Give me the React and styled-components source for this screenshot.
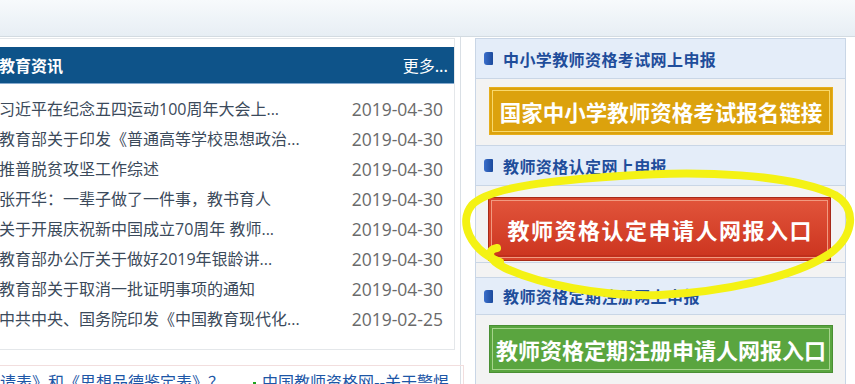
import React from 'react';
import styled, { createGlobalStyle, css } from 'styled-components';

const Global = createGlobalStyle`
  html, body { margin: 0; padding: 0; background: #fff; overflow: hidden; }
  body { font-family: "Noto Sans CJK SC", "Noto Sans", sans-serif; }
  * { box-sizing: content-box; }
`;

const Page = styled.div`
  position: relative;
  width: 855px;
  height: 384px;
  overflow: hidden;
  background: #fff;
`;

const TopBar = styled.div`
  height: 36px;
  background: linear-gradient(#f7fafc, #e7eef4);
  border-bottom: 1px solid #d3dbe1;
`;

const Main = styled.div`
  display: flex;
  height: 347px;
`;

const LeftCol = styled.div`
  flex: none;
  width: 460px;
  border-right: 1px solid #d9dfe5;
  display: flex;
  flex-direction: column;
`;

const NewsPanel = styled.div`
  margin: 1px 0 0 -10px;
  width: 463px;
  border: 1px solid #e4e7ea;
  padding-top: 8px;
  background: #fff;
`;

const NewsHeader = styled.div`
  height: 36px;
  background: #0e5389;
  border-bottom: 1px solid #86aace;
  display: flex;
  align-items: center;
  justify-content: space-between;
  padding: 0 6px 0 8px;
  color: #fff;
  font-size: 16px;
`;

const NewsTitle = styled.span`
  font-weight: 700;
`;

const More = styled.span`
  font-weight: 400;
`;

const NewsList = styled.ul`
  list-style: none;
  margin: 0;
  padding: 10px 11px 15px 8px;
`;

const NewsRow = styled.li`
  display: flex;
  justify-content: space-between;
  align-items: center;
  height: 30px;
  line-height: 30px;
  font-size: 16px;
  white-space: nowrap;
`;

const RowTitle = styled.span`
  color: #3b4a5b;
  font-family: "Open Sans", "Noto Sans CJK SC", sans-serif;
  font-size: 16px;
`;

const RowDate = styled.span`
  color: #6a6a6a;
  font-family: "Open Sans", sans-serif;
  font-size: 17.5px;
`;

const Marquee = styled.div`
  margin: 15px 0 0 -10px;
  width: 463px;
  height: 40px;
  border: 1px solid #f2dede;
  border-bottom: none;
  padding: 4px 0 0 9px;
  line-height: 22px;
  font-size: 16px;
  color: #1d56a6;
  white-space: nowrap;
  overflow: hidden;
`;

const Bullet = styled.span`
  display: inline-block;
  width: 3px;
  height: 3px;
  background: #1fa51f;
  vertical-align: middle;
  margin: 0 6px 0 29px;
`;

const RightCol = styled.div`
  flex: 1;
  padding: 1px 0 0 14px;
  display: flex;
  flex-direction: column;
`;

const Box = styled.div`
  width: 369px;
  flex: 1;
  border: 1px solid #c9d6e6;
  border-bottom: none;
  background: #f3f3f3;
`;

const SectionHeader = styled.div`
  height: ${p => p.$h || 39}px;
  background: #e4edf9;
  border-bottom: 1px solid #c9d6e6;
  display: flex;
  align-items: center;
  padding-left: 8px;
  ${p => p.$gap && css`
    margin-top: ${p.$gap}px;
    border-top: 1px solid #c9d6e6;
  `}
`;

const SectionIcon = styled.span`
  width: 9px;
  height: 13px;
  border-radius: 3px 1px 1px 3px;
  background: linear-gradient(90deg, #3a6ecb, #1b4a9c);
  margin-right: 10px;
  flex: none;
`;

const SectionTitle = styled.span`
  font-size: 16px;
  font-weight: 700;
  color: #1f4d9b;
  letter-spacing: 0.4px;
`;

const SectionBody = styled.div`
  padding: ${p => p.$pad};
  ${p => p.$bottomBorder && css`border-bottom: 1px solid #c9d6e6;`}
`;

const variants = {
  yellow: css`
    width: 344px;
    height: 48px;
    background: #dca20d;
    border: 1px solid #e6ae1c;
    box-shadow: inset 0 0 0 2px #dca20d, inset 0 0 0 3px #f9d96d;
    font-size: 21.5px;
  `,
  red: css`
    width: 343px;
    height: 64px;
    margin-left: -1px;
    background: linear-gradient(#e2553b, #cb331e);
    border: 1px solid #a72a18;
    box-shadow: inset 0 0 0 2px #d8442b, inset 0 0 0 3px #f19a80, inset 0 -2px 0 3px #c02f1c;
    font-size: 22px;
    letter-spacing: 1.5px;
    text-indent: 1.5px;
  `,
  green: css`
    width: 344px;
    height: 48px;
    background: #5aa53f;
    border: 1px solid #4a8f33;
    box-shadow: inset 0 0 0 2px #5aa53f, inset 0 0 0 3px #a6d48c;
    font-size: 22px;
  `,
};

const LinkButton = styled.div`
  box-sizing: border-box;
  display: flex;
  align-items: center;
  justify-content: center;
  color: #fff;
  font-weight: 700;
  white-space: nowrap;
  ${p => variants[p.$variant]}
`;

const Overlay = styled.svg`
  position: absolute;
  left: 0;
  top: 0;
  pointer-events: none;
`;

const news = [
  ['习近平在纪念五四运动100周年大会上...', '2019-04-30'],
  ['教育部关于印发《普通高等学校思想政治...', '2019-04-30'],
  ['推普脱贫攻坚工作综述', '2019-04-30'],
  ['张开华：一辈子做了一件事，教书育人', '2019-04-30'],
  ['关于开展庆祝新中国成立70周年 教师...', '2019-04-30'],
  ['教育部办公厅关于做好2019年银龄讲...', '2019-04-30'],
  ['教育部关于取消一批证明事项的通知', '2019-04-30'],
  ['中共中央、国务院印发《中国教育现代化...', '2019-02-25'],
];

export default function App() {
  return (
    <Page>
      <Global />
      <TopBar />
      <Main>
        <LeftCol>
          <NewsPanel>
            <NewsHeader>
              <NewsTitle>教育资讯</NewsTitle>
              <More>更多...</More>
            </NewsHeader>
            <NewsList>
              {news.map(([t, d], i) => (
                <NewsRow key={i}>
                  <RowTitle>{t}</RowTitle>
                  <RowDate>{d}</RowDate>
                </NewsRow>
              ))}
            </NewsList>
          </NewsPanel>
          <Marquee>
            <span>请表》和《思想品德鉴定表》？</span>
            <Bullet />
            <span>中国教师资格网--关于警惕</span>
          </Marquee>
        </LeftCol>
        <RightCol>
          <Box>
            <SectionHeader>
              <SectionIcon />
              <SectionTitle>中小学教师资格考试网上申报</SectionTitle>
            </SectionHeader>
            <SectionBody $pad="8px 0 10px 13px" $bottomBorder>
              <LinkButton $variant="yellow">国家中小学教师资格考试报名链接</LinkButton>
            </SectionBody>
            <SectionHeader>
              <SectionIcon />
              <SectionTitle>教师资格认定网上申报</SectionTitle>
            </SectionHeader>
            <SectionBody $pad="11px 0 1px 13px" $bottomBorder>
              <LinkButton $variant="red">教师资格认定申请人网报入口</LinkButton>
            </SectionBody>
            <SectionHeader $h={36} $gap={14}>
              <SectionIcon />
              <SectionTitle>教师资格定期注册网上申报</SectionTitle>
            </SectionHeader>
            <SectionBody $pad="10px 0 20px 13px">
              <LinkButton $variant="green">教师资格定期注册申请人网报入口</LinkButton>
            </SectionBody>
          </Box>
        </RightCol>
      </Main>
      <Overlay width="855" height="384" viewBox="0 0 855 384">
        <path
          d="M 500 262 C 470 250, 458 222, 472 205 C 490 186, 560 180, 620 176 C 700 170, 790 174, 835 195 C 860 210, 852 240, 826 256 C 790 278, 722 292, 660 295 C 600 297, 540 284, 505 268 C 488 260, 486 250, 497 248"
          fill="none"
          stroke="#f4f214"
          strokeWidth="8"
          strokeLinecap="round"
          strokeLinejoin="round"
        />
      </Overlay>
    </Page>
  );
}
